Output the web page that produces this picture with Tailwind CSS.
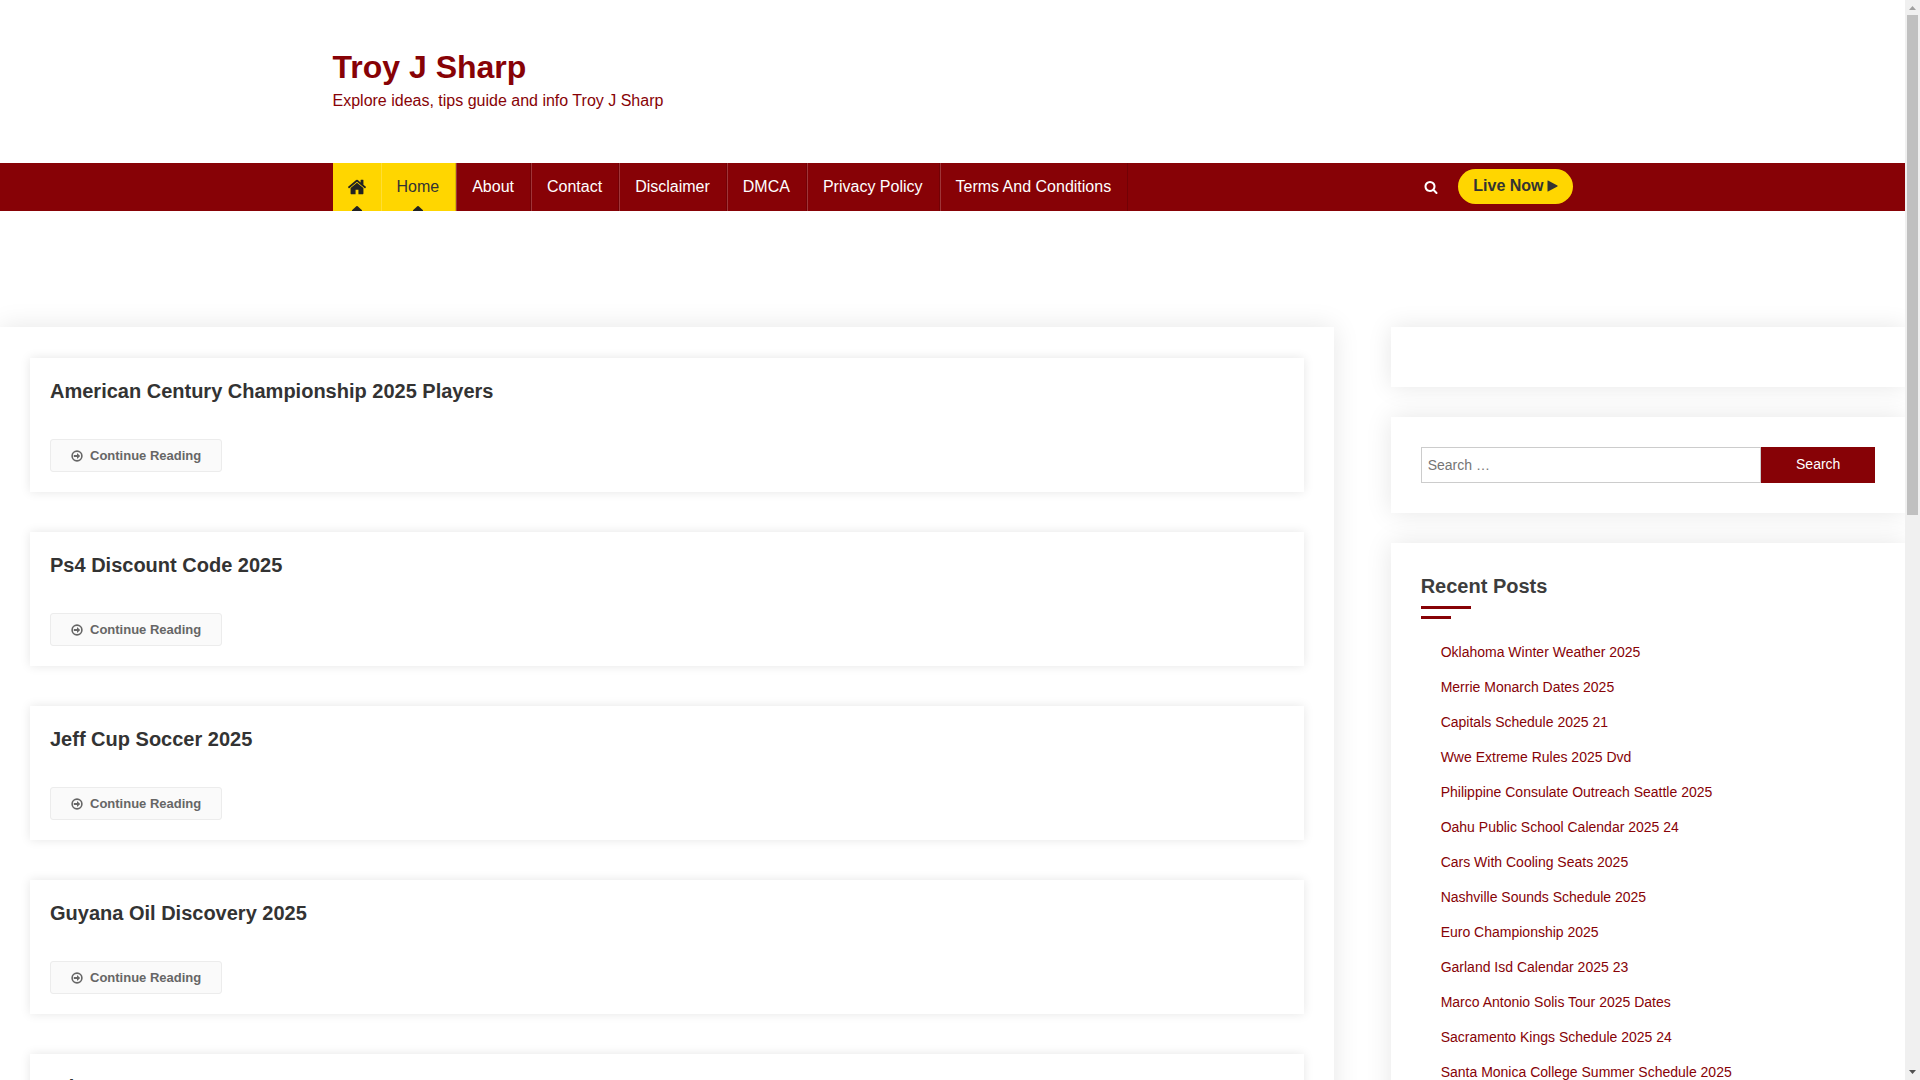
<!DOCTYPE html>
<html lang="en">
<head>
  <meta charset="UTF-8" />
  <meta name="viewport" content="width=device-width, initial-scale=1" />
  <title>Troy J Sharp</title>
  <script src="https://cdn.jsdelivr.net/npm/@tailwindcss/browser@4"></script>
</head>
<body class="flex h-screen overflow-hidden bg-white font-['Liberation_Sans',Arial,sans-serif] text-base text-[#333]">
  <!-- Icons -->
  <svg class="hidden">
    <symbol id="icon-home" viewBox="0 0 1792 1792"><path d="M1472 992v480q0 26-19 45t-45 19h-384v-384h-256v384h-384q-26 0-45-19t-19-45v-480q0-1 .5-3t.5-3l575-474 575 474q1 2 1 6zm223-69l-62 74q-8 9-21 11h-3q-13 0-21-7l-692-577-692 577q-12 8-24 7-13-2-21-11l-62-74q-8-10-7-23.500t11-21.500l719-599q32-26 76-26t76 26l244 204v-195q0-14 9-23t23-9h192q14 0 23 9t9 23v408l219 182q10 8 11 21.500t-7 23.500z"/></symbol>
    <symbol id="icon-search" viewBox="0 0 1792 1792"><path d="M1216 832q0-185-131.500-316.500t-316.500-131.500-316.500 131.500-131.500 316.500 131.500 316.500 316.500 131.500 316.500-131.500 131.500-316.500zm512 832q0 52-38 90t-90 38q-54 0-90-38l-343-342q-179 124-399 124-143 0-273.500-55.500t-225-150-150-225-55.500-273.500 55.500-273.500 150-225 225-150 273.500-55.500 273.500 55.500 225 150 150 225 55.500 273.500q0 220-124 399l343 343q37 37 37 90z"/></symbol>
    <symbol id="icon-arrow" viewBox="0 0 12 12"><circle cx="6" cy="6" r="4.900" fill="none" stroke="currentColor" stroke-width="1.600"/><path d="M2.800 5.100H6V3.100L9.200 6 6 8.900V6.900H2.800z"/></symbol>
    <symbol id="icon-caret" viewBox="0 0 10 5"><path d="M0 5V4.300L4.300.3Q5-.3 5.700.3L10 4.300V5z"/></symbol>
  </svg>

  <div class="min-w-0 flex-1 overflow-hidden">
    <header>
      <div class="mx-auto max-w-[1240px] pt-12 pb-[49px] text-[#870206]">
        <h1 class="mb-[2px] text-[32px] leading-[38px] font-bold"><a href="#">Troy J Sharp</a></h1>
        <p class="leading-[26px]">Explore ideas, tips guide and info Troy J Sharp</p>
      </div>
      <nav class="bg-[#870206] text-white">
        <div class="mx-auto flex h-12 max-w-[1240px] items-center">
          <a href="#" aria-label="Front page" class="relative flex h-full w-12 items-center justify-center bg-[#ffd600] text-[#222]">
            <svg class="size-5 fill-current"><use href="#icon-home"/></svg>
            <svg class="absolute bottom-0 left-[19px] h-[5px] w-[10px] fill-current"><use href="#icon-caret"/></svg>
          </a>
          <ul class="flex h-full flex-1 leading-[48px]">
            <li class="relative border-r border-l border-r-black/15 border-l-white/20 bg-[#ffd600] pr-4 pl-[15px] text-[#333]">
              <a href="#">Home</a>
              <svg class="absolute bottom-0 left-[31px] h-[5px] w-[10px] fill-[#222]"><use href="#icon-caret"/></svg>
            </li>
            <li class="border-r border-l border-r-black/15 border-l-white/20 pr-4 pl-[15px]"><a href="#">About</a></li>
            <li class="border-r border-l border-r-black/15 border-l-white/20 pr-4 pl-[15px]"><a href="#">Contact</a></li>
            <li class="border-r border-l border-r-black/15 border-l-white/20 pr-4 pl-[15px]"><a href="#">Disclaimer</a></li>
            <li class="border-r border-l border-r-black/15 border-l-white/20 pr-4 pl-[15px]"><a href="#">DMCA</a></li>
            <li class="border-r border-l border-r-black/15 border-l-white/20 pr-4 pl-[15px]"><a href="#">Privacy Policy</a></li>
            <li class="border-r border-l border-r-black/15 border-l-white/20 pr-4 pl-[15px]"><a href="#">Terms And Conditions</a></li>
          </ul>
          <button type="button" aria-label="Open search" class="mr-5"><svg class="size-[14px] fill-current"><use href="#icon-search"/></svg></button>
          <a href="#" class="mb-[2px] flex h-[35px] items-center gap-[3px] rounded-full bg-[#ffd600] px-[15px] font-bold text-[#333]">
            Live Now
            <svg viewBox="0 0 11 12" class="h-3 w-[11px] fill-current"><path d="M.5.800Q.500.200 1 .500L10.400 5.600Q11 6 10.400 6.400L1 11.500Q.500 11.800.500 11.200z"/></svg>
          </a>
        </div>
      </nav>
    </header>

    <div class="mt-[116px] flex items-start justify-between">
      <main class="w-[70%] space-y-10 bg-white px-[30px] pt-[31px] pb-[30px] shadow-[0_0_25px_rgba(0,0,0,0.1)]">
        <article class="bg-white p-5 shadow-[0_0_10px_rgba(0,0,0,0.1)]">
          <h2 class="mb-[35px] text-xl leading-[26px] font-bold"><a href="#">American Century Championship 2025 Players</a></h2>
          <a href="#" class="inline-flex h-[33px] items-center gap-[7px] rounded-[3px] border border-[#ececec] bg-[#fafafa] px-5 align-top text-[13px] font-bold text-[#666]"><svg class="size-3 fill-current"><use href="#icon-arrow"/></svg>Continue Reading</a>
        </article>
        <article class="bg-white p-5 shadow-[0_0_10px_rgba(0,0,0,0.1)]">
          <h2 class="mb-[35px] text-xl leading-[26px] font-bold"><a href="#">Ps4 Discount Code 2025</a></h2>
          <a href="#" class="inline-flex h-[33px] items-center gap-[7px] rounded-[3px] border border-[#ececec] bg-[#fafafa] px-5 align-top text-[13px] font-bold text-[#666]"><svg class="size-3 fill-current"><use href="#icon-arrow"/></svg>Continue Reading</a>
        </article>
        <article class="bg-white p-5 shadow-[0_0_10px_rgba(0,0,0,0.1)]">
          <h2 class="mb-[35px] text-xl leading-[26px] font-bold"><a href="#">Jeff Cup Soccer 2025</a></h2>
          <a href="#" class="inline-flex h-[33px] items-center gap-[7px] rounded-[3px] border border-[#ececec] bg-[#fafafa] px-5 align-top text-[13px] font-bold text-[#666]"><svg class="size-3 fill-current"><use href="#icon-arrow"/></svg>Continue Reading</a>
        </article>
        <article class="bg-white p-5 shadow-[0_0_10px_rgba(0,0,0,0.1)]">
          <h2 class="mb-[35px] text-xl leading-[26px] font-bold"><a href="#">Guyana Oil Discovery 2025</a></h2>
          <a href="#" class="inline-flex h-[33px] items-center gap-[7px] rounded-[3px] border border-[#ececec] bg-[#fafafa] px-5 align-top text-[13px] font-bold text-[#666]"><svg class="size-3 fill-current"><use href="#icon-arrow"/></svg>Continue Reading</a>
        </article>
        <article class="bg-white p-5 shadow-[0_0_10px_rgba(0,0,0,0.1)]">
          <h2 class="mb-[35px] text-xl leading-[26px] font-bold"><a href="#">Wi</a></h2>
          <a href="#" class="inline-flex h-[33px] items-center gap-[7px] rounded-[3px] border border-[#ececec] bg-[#fafafa] px-5 align-top text-[13px] font-bold text-[#666]"><svg class="size-3 fill-current"><use href="#icon-arrow"/></svg>Continue Reading</a>
        </article>
      </main>

      <aside class="w-[27%] space-y-[30px] text-sm">
        <section class="bg-white p-[30px] shadow-[0_0_25px_rgba(0,0,0,0.1)]"></section>
        <section class="bg-white p-[30px] shadow-[0_0_25px_rgba(0,0,0,0.1)]">
          <form class="flex h-9">
            <label for="search" class="sr-only">Search for:</label>
            <input id="search" type="search" placeholder="Search …" class="w-3/4 min-w-0 border border-[#ccc] px-[6px] placeholder:text-[#757575]" />
            <button type="submit" class="w-1/4 bg-[#870206] pb-[2px] text-white">Search</button>
          </form>
        </section>
        <section class="bg-white p-[30px] shadow-[0_0_25px_rgba(0,0,0,0.1)]">
          <h2 class="text-xl leading-[26px] font-bold text-[#3d3d3d]">Recent Posts</h2>
          <div class="mt-[7px] h-[3px] w-[50px] bg-[#870206]"></div>
          <div class="mt-[7px] h-[3px] w-[30px] bg-[#870206]"></div>
          <ul class="mt-[21px] space-y-[10px] pl-5 leading-[25px] text-[#870206]">
            <li><a href="#">Oklahoma Winter Weather 2025</a></li>
            <li><a href="#">Merrie Monarch Dates 2025</a></li>
            <li><a href="#">Capitals Schedule 2025 21</a></li>
            <li><a href="#">Wwe Extreme Rules 2025 Dvd</a></li>
            <li><a href="#">Philippine Consulate Outreach Seattle 2025</a></li>
            <li><a href="#">Oahu Public School Calendar 2025 24</a></li>
            <li><a href="#">Cars With Cooling Seats 2025</a></li>
            <li><a href="#">Nashville Sounds Schedule 2025</a></li>
            <li><a href="#">Euro Championship 2025</a></li>
            <li><a href="#">Garland Isd Calendar 2025 23</a></li>
            <li><a href="#">Marco Antonio Solis Tour 2025 Dates</a></li>
            <li><a href="#">Sacramento Kings Schedule 2025 24</a></li>
            <li><a href="#">Santa Monica College Summer Schedule 2025</a></li>
          </ul>
        </section>
      </aside>
    </div>
  </div>

  <!-- Scrollbar -->
  <div class="flex w-[15px] shrink-0 flex-col items-center bg-[#f0f0f0]" aria-hidden="true">
    <svg viewBox="0 0 15 15" class="size-[15px] shrink-0 fill-[#a0a0a0]"><path d="M4 10h7L7.500 6z"/></svg>
    <div class="h-[500px] w-[11px] bg-[#c0c0c0]"></div>
    <svg viewBox="0 0 15 15" class="mt-auto size-[15px] shrink-0 fill-[#505050]"><path d="M4 5h7L7.500 9z"/></svg>
  </div>
</body>
</html>
